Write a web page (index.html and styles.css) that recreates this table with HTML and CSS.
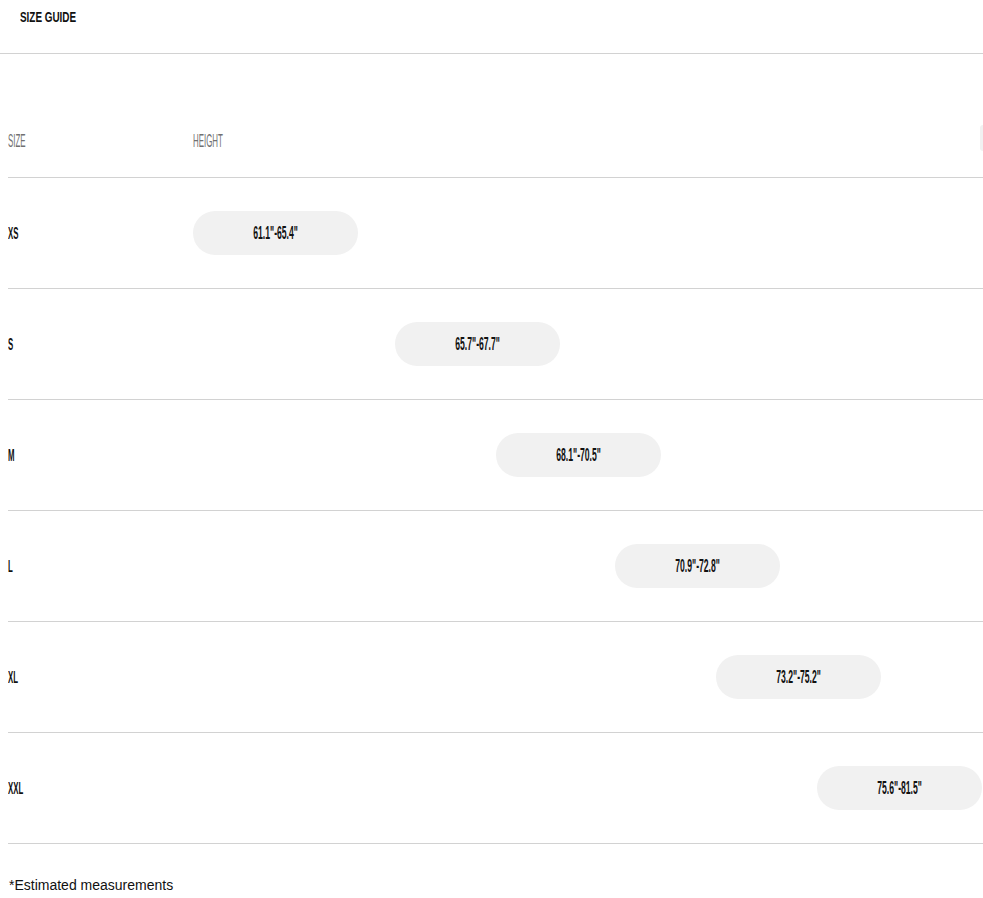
FILE: index.html
```html
<!DOCTYPE html>
<html lang="en">
<head>
<meta charset="utf-8">
<title>Size Guide</title>
<link rel="stylesheet" href="styles.css">
</head>
<body>
<header class="topbar">
  <h1 class="title"><span class="cond cond-title">SIZE GUIDE</span></h1>
</header>
<main class="guide">
  <div class="row head">
    <div class="col-size"><span class="cond cond-head">SIZE</span></div>
    <div class="col-chart"><span class="cond cond-head">HEIGHT</span></div>
    <div class="edge"></div>
  </div>
  <div class="row">
    <div class="col-size"><span class="cond cond-label">XS</span></div>
    <div class="col-chart"><div class="pill" style="margin-left:0px"><span class="cond cond-pill">61.1"-65.4"</span></div></div>
  </div>
  <div class="row">
    <div class="col-size"><span class="cond cond-label">S</span></div>
    <div class="col-chart"><div class="pill" style="margin-left:202px"><span class="cond cond-pill">65.7"-67.7"</span></div></div>
  </div>
  <div class="row">
    <div class="col-size"><span class="cond cond-label">M</span></div>
    <div class="col-chart"><div class="pill" style="margin-left:303px"><span class="cond cond-pill">68.1"-70.5"</span></div></div>
  </div>
  <div class="row">
    <div class="col-size"><span class="cond cond-label">L</span></div>
    <div class="col-chart"><div class="pill" style="margin-left:422px"><span class="cond cond-pill">70.9"-72.8"</span></div></div>
  </div>
  <div class="row">
    <div class="col-size"><span class="cond cond-label">XL</span></div>
    <div class="col-chart"><div class="pill" style="margin-left:523px"><span class="cond cond-pill">73.2"-75.2"</span></div></div>
  </div>
  <div class="row">
    <div class="col-size"><span class="cond cond-label">XXL</span></div>
    <div class="col-chart"><div class="pill" style="margin-left:624px"><span class="cond cond-pill">75.6"-81.5"</span></div></div>
  </div>
  <p class="note">*Estimated measurements</p>
</main>
</body>
</html>
```
FILE: styles.css
```css
html, body {
  margin: 0;
  padding: 0;
  background: #ffffff;
  overflow-x: hidden;
}
body {
  font-family: "Liberation Sans", Arial, sans-serif;
  color: #111111;
}
.topbar {
  height: 53px;
  border-bottom: 1px solid #d2d2d2;
  display: flex;
  align-items: flex-start;
}
.title {
  margin: 0;
  padding: 7px 0 0 20px;
  font-size: 15px;
  line-height: 20px;
  font-weight: 700;
  color: #111111;
}
.cond {
  display: inline-block;
  white-space: nowrap;
  transform-origin: left center;
}
.cond-title {
  transform: scaleX(0.66);
}
.guide {
  margin-left: 8px;
}
.row {
  display: flex;
  align-items: center;
  height: 110px;
  border-bottom: 1px solid #d2d2d2;
}
.row.head {
  height: 124px;
  align-items: flex-start;
  box-sizing: border-box;
  padding-top: 77px;
}
.col-size {
  width: 185px;
  flex: none;
  font-size: 18px;
  line-height: 20px;
}
.col-chart {
  flex: 1;
  display: flex;
  align-items: center;
  font-size: 18px;
  line-height: 20px;
}
.cond-head {
  color: #707070;
  transform: scaleX(0.44);
}
.cond-label {
  font-weight: 700;
  font-size: 17px;
  transform: scaleX(0.46);
}
.edge {
  margin-top: -6px;
  width: 3px;
  height: 26px;
  border-radius: 3px 0 0 3px;
  background: #f1f1f1;
  flex: none;
}
.pill {
  width: 165px;
  height: 44px;
  border-radius: 22px;
  background: #f1f1f1;
  display: flex;
  align-items: center;
  justify-content: center;
  flex: none;
}
.cond-pill {
  font-weight: 700;
  font-size: 18px;
  transform-origin: center center;
  transform: scaleX(0.48);
}
.note {
  margin: 31px 0 0 1px;
  font-size: 14px;
  line-height: 20px;
  color: #111111;
}
```
